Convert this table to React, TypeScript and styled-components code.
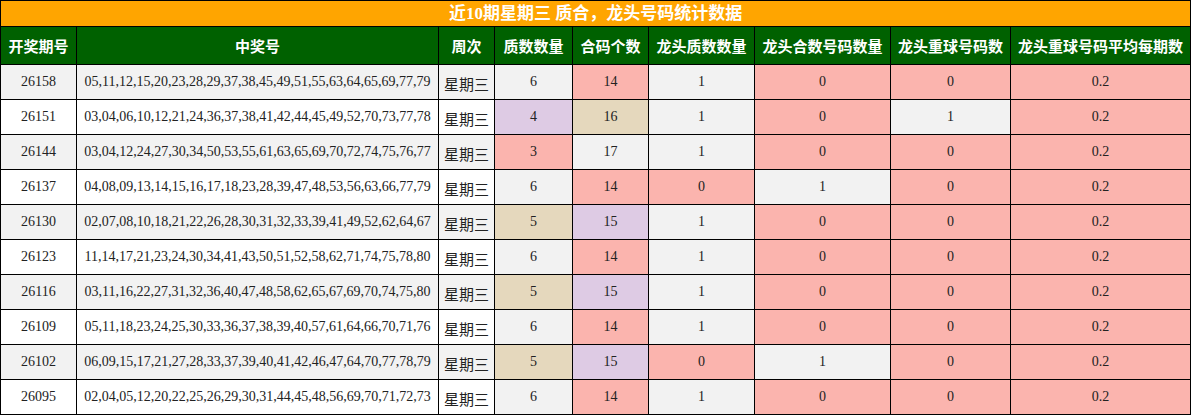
import * as React from 'react';
import styled, { createGlobalStyle } from 'styled-components';

const colors = {
    title: '#ffa500',
    header: '#006100',
    border: '#000',
    text: '#222',
    stripe: '#f2f2f2',
    grey: '#f2f2f2',
    pink: '#fbb4ae',
    purple: '#decbe4',
    tan: '#e5d8bd'
};

type Tone = 'grey' | 'pink' | 'purple' | 'tan';

const GlobalStyle = createGlobalStyle`
    body {
        margin: 0;
        background: #fff;
        font-family: "Liberation Serif", "Noto Sans CJK SC", serif;
    }
`;

const Table = styled.table`
    border-collapse: collapse;
    table-layout: fixed;
    width: 1191px;
    color: ${colors.text};
    font-family: "Liberation Serif", "Noto Sans CJK SC", serif;

    td, th {
        border: 1px solid ${colors.border};
        padding: 0;
        text-align: center;
        white-space: nowrap;
    }
`;

const TitleCell = styled.th`
    height: 25px;
    background: ${colors.title};
    color: #fff;
    font-size: 17px;
    font-weight: bold;
    line-height: 25px;
`;

const HeadCell = styled.th`
    height: 37px;
    background: ${colors.header};
    color: #fff;
    font-size: 15px;
    font-weight: bold;
    font-family: "Noto Sans CJK SC", sans-serif;
`;

const Row = styled.tr<{ $striped: boolean }>`
    height: 35px;
    background: ${p => p.$striped ? colors.stripe : '#fff'};
`;

const Cell = styled.td`
    font-size: 14px;
`;

const DayCell = styled.td`
    font-size: 15px;
    font-family: "Noto Sans CJK SC", sans-serif;
    padding-top: 2px !important;
`;

const StatCell = styled.td<{ $tone: Tone }>`
    font-size: 14px;
    background: ${p => colors[p.$tone]};
`;

const widths = [76, 362, 56, 78, 76, 106, 136, 120, 180];
const headers = ['开奖期号', '中奖号', '周次', '质数数量', '合码个数', '龙头质数数量', '龙头合数号码数量', '龙头重球号码数', '龙头重球号码平均每期数'];

type Stat = [string, Tone];

interface Draw {
    issue: string;
    numbers: string;
    stats: Stat[];
}

const draws: Draw[] = [
    { issue: '26158', numbers: '05,11,12,15,20,23,28,29,37,38,45,49,51,55,63,64,65,69,77,79', stats: [['6', 'grey'], ['14', 'pink'], ['1', 'grey'], ['0', 'pink'], ['0', 'pink'], ['0.2', 'pink']] },
    { issue: '26151', numbers: '03,04,06,10,12,21,24,36,37,38,41,42,44,45,49,52,70,73,77,78', stats: [['4', 'purple'], ['16', 'tan'], ['1', 'grey'], ['0', 'pink'], ['1', 'grey'], ['0.2', 'pink']] },
    { issue: '26144', numbers: '03,04,12,24,27,30,34,50,53,55,61,63,65,69,70,72,74,75,76,77', stats: [['3', 'pink'], ['17', 'grey'], ['1', 'grey'], ['0', 'pink'], ['0', 'pink'], ['0.2', 'pink']] },
    { issue: '26137', numbers: '04,08,09,13,14,15,16,17,18,23,28,39,47,48,53,56,63,66,77,79', stats: [['6', 'grey'], ['14', 'pink'], ['0', 'pink'], ['1', 'grey'], ['0', 'pink'], ['0.2', 'pink']] },
    { issue: '26130', numbers: '02,07,08,10,18,21,22,26,28,30,31,32,33,39,41,49,52,62,64,67', stats: [['5', 'tan'], ['15', 'purple'], ['1', 'grey'], ['0', 'pink'], ['0', 'pink'], ['0.2', 'pink']] },
    { issue: '26123', numbers: '11,14,17,21,23,24,30,34,41,43,50,51,52,58,62,71,74,75,78,80', stats: [['6', 'grey'], ['14', 'pink'], ['1', 'grey'], ['0', 'pink'], ['0', 'pink'], ['0.2', 'pink']] },
    { issue: '26116', numbers: '03,11,16,22,27,31,32,36,40,47,48,58,62,65,67,69,70,74,75,80', stats: [['5', 'tan'], ['15', 'purple'], ['1', 'grey'], ['0', 'pink'], ['0', 'pink'], ['0.2', 'pink']] },
    { issue: '26109', numbers: '05,11,18,23,24,25,30,33,36,37,38,39,40,57,61,64,66,70,71,76', stats: [['6', 'grey'], ['14', 'pink'], ['1', 'grey'], ['0', 'pink'], ['0', 'pink'], ['0.2', 'pink']] },
    { issue: '26102', numbers: '06,09,15,17,21,27,28,33,37,39,40,41,42,46,47,64,70,77,78,79', stats: [['5', 'tan'], ['15', 'purple'], ['0', 'pink'], ['1', 'grey'], ['0', 'pink'], ['0.2', 'pink']] },
    { issue: '26095', numbers: '02,04,05,12,20,22,25,26,29,30,31,44,45,48,56,69,70,71,72,73', stats: [['6', 'grey'], ['14', 'pink'], ['1', 'grey'], ['0', 'pink'], ['0', 'pink'], ['0.2', 'pink']] }
];

export default function App() {
    return (
        <>
            <GlobalStyle />
            <Table>
                <colgroup>
                    {widths.map((w, i) => <col key={i} style={{ width: w }} />)}
                </colgroup>
                <thead>
                    <tr>
                        <TitleCell colSpan={9}>近10期星期三 质合，龙头号码统计数据</TitleCell>
                    </tr>
                    <tr>
                        {headers.map(h => <HeadCell key={h}>{h}</HeadCell>)}
                    </tr>
                </thead>
                <tbody>
                    {draws.map((d, i) => (
                        <Row key={d.issue} $striped={i % 2 === 0}>
                            <Cell>{d.issue}</Cell>
                            <Cell>{d.numbers}</Cell>
                            <DayCell>星期三</DayCell>
                            {d.stats.map(([v, tone], j) => (
                                <StatCell key={j} $tone={tone}>{v}</StatCell>
                            ))}
                        </Row>
                    ))}
                </tbody>
            </Table>
        </>
    );
}
